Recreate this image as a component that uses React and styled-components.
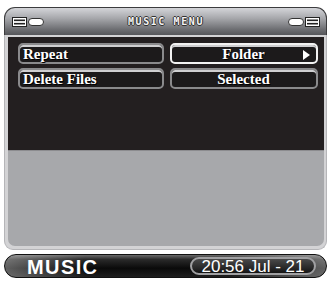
import { Fragment } from "react";
import styled, { createGlobalStyle } from "styled-components";

const Global = createGlobalStyle`
  html, body {
    margin: 0;
    padding: 0;
    background: #ffffff;
  }
`;

const Screen = styled.div`
  width: 331px;
  height: 281px;
  box-sizing: border-box;
  padding: 7px 4px 0 4px;
  display: flex;
  flex-direction: column;
`;

const Header = styled.div`
  height: 28px;
  box-sizing: border-box;
  border: 1px solid #3c3c3e;
  border-bottom: none;
  border-radius: 11px 11px 0 0;
  background: linear-gradient(#d4d5d9 0%, #a4a5a9 40%, #6c6d71 80%, #55565a 100%);
  display: flex;
  align-items: center;
  justify-content: space-between;
  padding: 0 6px 0 7px;
`;

const Title = styled.div`
  font-family: "DejaVu Sans Mono", monospace;
  font-size: 10px;
  font-weight: bold;
  letter-spacing: 1.6px;
  color: #f4f4f4;
  text-shadow: 1px 0 0 #333, -1px 0 0 #333, 0 1px 0 #333, 0 -1px 0 #333;
`;

const IconGroup = styled.div`
  display: flex;
  align-items: center;
  gap: 1px;
`;

const Frame = styled.div`
  height: 215px;
  box-sizing: border-box;
  background: #d3d3d5;
  border: 1px solid #b5b5b8;
  border-top: none;
  border-radius: 0 0 9px 9px;
  padding: 2px 2px 3px 3px;
  display: flex;
  flex-direction: column;
`;

const DarkPanel = styled.div`
  height: 113px;
  box-sizing: border-box;
  background: #231f20;
  padding: 6px 7px 0 10px;
  display: grid;
  grid-template-columns: 146px 148px;
  grid-auto-rows: 21px;
  column-gap: 6px;
  row-gap: 4px;
`;

const GrayPanel = styled.div`
  flex: 1;
  background: #a7a8ab;
  border-top: 1px solid #8c8c8f;
  border-radius: 0 0 7px 7px;
`;

const Cell = styled.div`
  box-sizing: border-box;
  border: 2px solid ${(p) => (p.$active ? "#f2f2f2" : "#8a8a8c")};
  border-radius: 5px;
  background: #1c1a1b;
  box-shadow: inset 0 2px 0 #cfcfd1;
  display: flex;
  align-items: center;
  justify-content: ${(p) => (p.$center ? "center" : "flex-start")};
  padding: 1px 4px 0 3px;
  position: relative;
  font-family: "Liberation Serif", serif;
  font-weight: bold;
  font-size: 15px;
  color: #ffffff;
  text-shadow: 1px 1px 0 #000;
`;

const Arrow = styled.span`
  position: absolute;
  right: 6px;
  top: 5px;
  width: 0;
  height: 0;
  border-top: 5px solid transparent;
  border-bottom: 5px solid transparent;
  border-left: 7px solid #ffffff;
`;

const BottomBar = styled.div`
  margin-top: 4px;
  height: 24px;
  box-sizing: border-box;
  border-radius: 12px;
  border: 1px solid #111;
  background:
    linear-gradient(90deg, rgba(255,255,255,0.35) 0%, rgba(255,255,255,0) 25%, rgba(255,255,255,0) 70%, rgba(255,255,255,0.35) 100%),
    linear-gradient(#6a6a6a 0%, #2a2a2a 20%, #0a0a0a 60%, #1e1e1e 100%);
  display: flex;
  align-items: center;
  justify-content: space-between;
  padding: 0 10px 0 22px;
`;

const BarLabel = styled.div`
  font-family: "Liberation Sans", Arial, sans-serif;
  font-weight: bold;
  font-size: 20px;
  letter-spacing: 1.4px;
  color: #ffffff;
  line-height: 1;
  padding-top: 1px;
`;

const Clock = styled.div`
  width: 126px;
  height: 18px;
  box-sizing: border-box;
  border: 2px solid #a0a0a2;
  border-radius: 9px;
  background: linear-gradient(#4a4a4a, #151515);
  display: flex;
  align-items: center;
  justify-content: center;
  font-family: "Liberation Sans", Arial, sans-serif;
  font-size: 17px;
  color: #ffffff;
  line-height: 1;
`;

const BoxIcon = () => (
  <svg width="15" height="10" viewBox="0 0 15 10">
    <rect x="0.5" y="0.5" width="14" height="9" fill="#ffffff" stroke="#222" />
    <rect x="2" y="2.5" width="11" height="1.6" fill="#222" />
    <rect x="2" y="5.9" width="11" height="1.6" fill="#222" />
  </svg>
);

const PillIcon = () => (
  <svg width="16" height="8" viewBox="0 0 16 8">
    <rect x="0.5" y="0.5" width="15" height="7" rx="3.5" fill="#ffffff" stroke="#333" />
  </svg>
);

const rows = [
  { label: "Repeat", value: "Folder", active: true },
  { label: "Delete Files", value: "Selected", active: false },
];

export default function App() {
  return (
    <>
      <Global />
      <Screen>
        <Header>
          <IconGroup>
            <BoxIcon />
            <PillIcon />
          </IconGroup>
          <Title>MUSIC MENU</Title>
          <IconGroup>
            <PillIcon />
            <BoxIcon />
          </IconGroup>
        </Header>
        <Frame>
          <DarkPanel>
            {rows.map((r) => (
              <Fragment key={r.label}>
                <Cell>{r.label}</Cell>
                <Cell $center $active={r.active}>
                  {r.value}
                  {r.active && <Arrow />}
                </Cell>
              </Fragment>
            ))}
          </DarkPanel>
          <GrayPanel />
        </Frame>
        <BottomBar>
          <BarLabel>MUSIC</BarLabel>
          <Clock>20:56 Jul - 21</Clock>
        </BottomBar>
      </Screen>
    </>
  );
}
